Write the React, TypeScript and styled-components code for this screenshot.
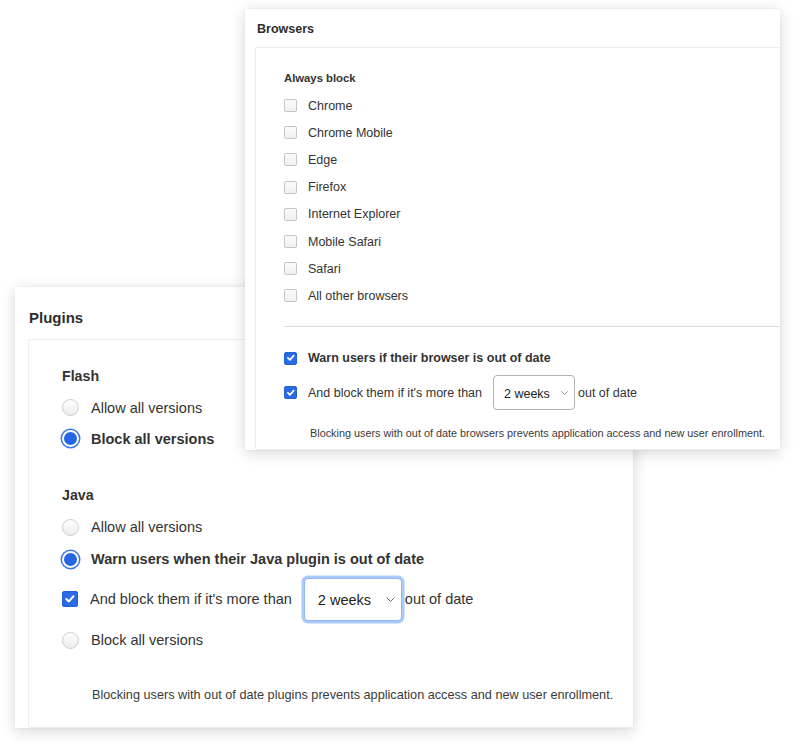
import React from "react";
import styled, { createGlobalStyle, css } from "styled-components";

const Global = createGlobalStyle`
  html, body { margin: 0; padding: 0; background: #ffffff; }
  body { font-family: "Liberation Sans", Arial, Helvetica, sans-serif; color: #333; }
`;

const Canvas = styled.div`
  position: relative;
  width: 795px;
  height: 751px;
  overflow: hidden;
  background: #fff;
`;

const Card = styled.section<{ $left: number; $top: number; $w: number; $h: number; $z: number }>`
  position: absolute;
  left: ${(p) => p.$left}px;
  top: ${(p) => p.$top}px;
  width: ${(p) => p.$w}px;
  height: ${(p) => p.$h}px;
  z-index: ${(p) => p.$z};
  background: #fff;
  box-shadow: 0 3px 14px rgba(0, 0, 0, 0.16), 0 0 2px rgba(0, 0, 0, 0.06);
  overflow: hidden;
  box-sizing: border-box;
  display: flex;
  flex-direction: column;
`;

const Title = styled.h2<{ $size: number; $pad: string }>`
  margin: 0;
  padding: ${(p) => p.$pad};
  font-size: ${(p) => p.$size}px;
  font-weight: 700;
  color: #2e2e2e;
  line-height: 1.2;
`;

const Panel = styled.div<{ $ml: number; $pad: string }>`
  margin-left: ${(p) => p.$ml}px;
  width: 1000px;
  flex: 1;
  border: 1px solid #eeeeee;
  border-radius: 2px;
  box-sizing: border-box;
  padding: ${(p) => p.$pad};
  display: flex;
  flex-direction: column;
`;

const Heading = styled.div<{ $size: number; $lh: number; $mb: number; $mt?: number }>`
  font-size: ${(p) => p.$size}px;
  line-height: ${(p) => p.$lh}px;
  font-weight: 700;
  color: #333;
  margin-bottom: ${(p) => p.$mb}px;
  margin-top: ${(p) => p.$mt ?? 0}px;
`;

const Row = styled.label<{ $h: number; $gap: number; $size: number; $bold?: boolean }>`
  display: flex;
  align-items: center;
  height: ${(p) => p.$h}px;
  gap: ${(p) => p.$gap}px;
  font-size: ${(p) => p.$size}px;
  font-weight: ${(p) => (p.$bold ? 700 : 400)};
  color: #333;
  white-space: nowrap;
`;

const Box = styled.span<{ $size: number; $checked?: boolean }>`
  display: inline-flex;
  align-items: center;
  justify-content: center;
  flex: none;
  width: ${(p) => p.$size}px;
  height: ${(p) => p.$size}px;
  box-sizing: border-box;
  border-radius: 2px;
  ${(p) =>
    p.$checked
      ? css`
          background: #2a6ae2;
          border: 1px solid #2262d8;
        `
      : css`
          background: linear-gradient(#fbfbfb, #f0f0f0);
          border: 1px solid #c6c6c6;
        `}
`;

const Radio = styled.span<{ $size: number; $checked?: boolean }>`
  flex: none;
  width: ${(p) => p.$size}px;
  height: ${(p) => p.$size}px;
  box-sizing: border-box;
  border-radius: 50%;
  ${(p) =>
    p.$checked
      ? css`
          background: #2566e4;
          border: 2px solid #ffffff;
          box-shadow: 0 0 0 1.5px #3b78ea;
        `
      : css`
          background: linear-gradient(#ffffff, #ececec);
          border: 1px solid #cdcdcd;
        `}
`;

const Divider = styled.hr<{ $mt: number; $mb: number }>`
  margin: ${(p) => p.$mt}px 0 ${(p) => p.$mb}px 0;
  border: none;
  border-top: 1px solid #dcdcdc;
  height: 0;
`;

const Select = styled.span<{ $w: number; $h: number; $size: number; $pl: number; $focus?: boolean }>`
  display: inline-flex;
  align-items: center;
  justify-content: space-between;
  box-sizing: border-box;
  width: ${(p) => p.$w}px;
  height: ${(p) => p.$h}px;
  padding: 2px 6px 0 ${(p) => p.$pl}px;
  font-size: ${(p) => p.$size}px;
  font-weight: 400;
  color: #222;
  background: #fff;
  border-radius: 4px;
  ${(p) =>
    p.$focus
      ? css`
          border: 1px solid #8fb8f4;
          box-shadow: 0 0 0 2.5px #a9cafa;
        `
      : css`
          border: 1px solid #b3b3b3;
        `}
`;

const Trail = styled.span<{ $ml: number }>`
  margin-left: ${(p) => p.$ml}px;
`;

const Note = styled.div<{ $size: number; $ml: number; $mt: number }>`
  font-size: ${(p) => p.$size}px;
  line-height: 1.3;
  color: #3a3a3a;
  margin-left: ${(p) => p.$ml}px;
  margin-top: ${(p) => p.$mt}px;
  white-space: nowrap;
`;

const Check = ({ s }: { s: number }) => (
  <svg width={s * 0.72} height={s * 0.72} viewBox="0 0 10 10" fill="none">
    <path d="M2 5.2 L4.2 7.3 L8.2 2.8" stroke="#fff" strokeWidth="1.8" strokeLinecap="round" strokeLinejoin="round" />
  </svg>
);

const Chevron = ({ w }: { w: number }) => (
  <svg width={w} height={w * 0.6} viewBox="0 0 10 6" fill="none">
    <path d="M1 1 L5 5 L9 1" stroke="#666" strokeWidth="1.1" strokeLinecap="round" strokeLinejoin="round" />
  </svg>
);

const browsers = [
  "Chrome",
  "Chrome Mobile",
  "Edge",
  "Firefox",
  "Internet Explorer",
  "Mobile Safari",
  "Safari",
  "All other browsers",
];

export default function App() {
  return (
    <>
      <Global />
      <Canvas>
        <Card $left={15} $top={287} $w={618} $h={441} $z={1}>
          <Title $size={15} $pad="22px 0 12px 14px">Plugins</Title>
          <Panel $ml={13} $pad="27px 0 0 33px">
            <Heading $size={14.2} $lh={18} $mb={7}>Flash</Heading>
            <Row $h={31} $gap={12} $size={14.5}>
              <Radio $size={17} />
              Allow all versions
            </Row>
            <Row $h={31} $gap={12} $size={14.5} $bold>
              <Radio $size={17} $checked />
              Block all versions
            </Row>
            <Heading $size={14.2} $lh={18} $mb={7} $mt={32}>Java</Heading>
            <Row $h={32} $gap={12} $size={14.5}>
              <Radio $size={17} />
              Allow all versions
            </Row>
            <Row $h={32} $gap={12} $size={14.5} $bold>
              <Radio $size={17} $checked />
              Warn users when their Java plugin is out of date
            </Row>
            <Row $h={48} $gap={12} $size={14.5}>
              <Box $size={16} $checked>
                <Check s={16} />
              </Box>
              <span>And block them if it's more than</span>
              <Select $w={98} $h={43} $size={14.5} $pl={13} $focus>
                2 weeks
                <Chevron w={9} />
              </Select>
              <Trail $ml={-9}>out of date</Trail>
            </Row>
            <Row $h={34} $gap={12} $size={14.5}>
              <Radio $size={17} />
              Block all versions
            </Row>
            <Note $size={12.7} $ml={30} $mt={30}>
              Blocking users with out of date plugins prevents application access and new user enrollment.
            </Note>
          </Panel>
        </Card>

        <Card $left={245} $top={9} $w={535} $h={441} $z={2}>
          <Title $size={12.5} $pad="13px 0 10px 12px">Browsers</Title>
          <Panel $ml={10} $pad="22px 0 0 28px">
            <Heading $size={11.3} $lh={16} $mb={6}>Always block</Heading>
            {browsers.map((b) => (
              <Row key={b} $h={27.2} $gap={11} $size={12.5}>
                <Box $size={13} />
                {b}
              </Row>
            ))}
            <Divider $mt={16} $mb={18} />
            <Row $h={27} $gap={11} $size={12.5} $bold>
              <Box $size={13} $checked>
                <Check s={13} />
              </Box>
              Warn users if their browser is out of date
            </Row>
            <Row $h={42} $gap={11} $size={12.5}>
              <Box $size={13} $checked>
                <Check s={13} />
              </Box>
              <span>And block them if it's more than</span>
              <Select $w={82} $h={35} $size={12.5} $pl={10}>
                2 weeks
                <Chevron w={7} />
              </Select>
              <Trail $ml={-8}>out of date</Trail>
            </Row>
            <Note $size={10.85} $ml={26} $mt={12}>
              Blocking users with out of date browsers prevents application access and new user enrollment.
            </Note>
          </Panel>
        </Card>
      </Canvas>
    </>
  );
}
